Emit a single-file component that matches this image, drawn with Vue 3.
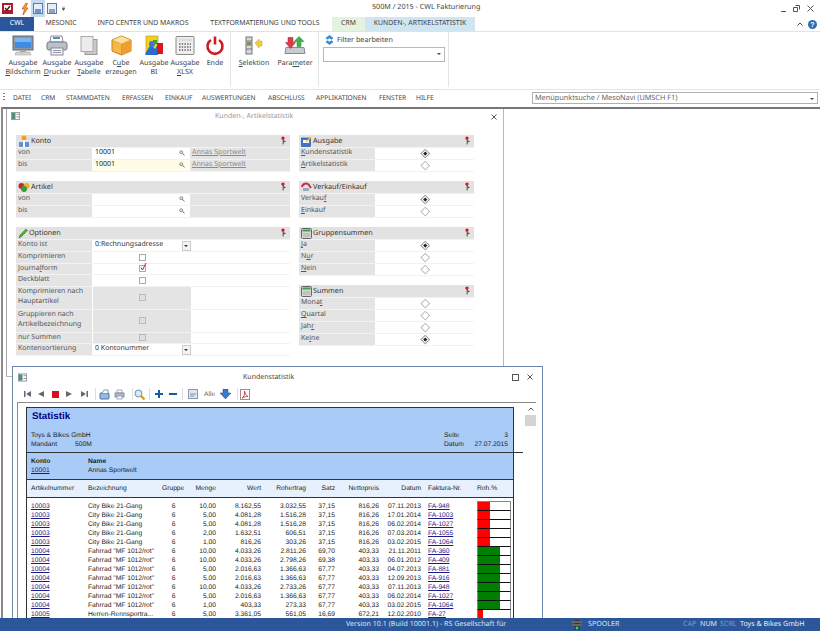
<script setup>
const tabs = [
  { t: 'MESONIC', w: 54 },
  { t: 'INFO CENTER UND MAKROS', w: 110 },
  { t: 'TEXTFORMATIERUNG UND TOOLS', w: 134 }
]
const menus = [
  ['DATEI', 28], ['CRM', 25], ['STAMMDATEN', 56], ['ERFASSEN', 43], ['EINKAUF', 37],
  ['AUSWERTUNGEN', 66], ['ABSCHLUSS', 48], ['APPLIKATIONEN', 63], ['FENSTER', 37], ['HILFE', 30]
]
const A = 'City Bike 21-Gang'
const B = 'Fahrrad "MF 1012/rot"'
const rows = [
  ['10003', A, '10,00', '8.162,55', '3.032,55', '37,15', '816,26', '07.11.2013', 'FA-948'],
  ['10003', A, '5,00', '4.081,28', '1.516,28', '37,15', '816,26', '17.01.2014', 'FA-1003'],
  ['10003', A, '5,00', '4.081,28', '1.516,28', '37,15', '816,26', '06.02.2014', 'FA-1027'],
  ['10003', A, '2,00', '1.632,51', '606,51', '37,15', '816,26', '07.03.2014', 'FA-1055'],
  ['10003', A, '1,00', '816,26', '303,26', '37,15', '816,26', '03.02.2015', 'FA-1064'],
  ['10004', B, '10,00', '4.033,26', '2.811,26', '69,70', '403,33', '21.11.2011', 'FA-360'],
  ['10004', B, '10,00', '4.033,26', '2.798,26', '69,38', '403,33', '06.01.2012', 'FA-409'],
  ['10004', B, '5,00', '2.016,63', '1.366,63', '67,77', '403,33', '04.07.2013', 'FA-881'],
  ['10004', B, '5,00', '2.016,63', '1.366,63', '67,77', '403,33', '12.09.2013', 'FA-916'],
  ['10004', B, '10,00', '4.033,26', '2.733,26', '67,77', '403,33', '07.11.2013', 'FA-948'],
  ['10004', B, '5,00', '2.016,63', '1.366,63', '67,77', '403,33', '06.02.2014', 'FA-1027'],
  ['10004', B, '1,00', '403,33', '273,33', '67,77', '403,33', '03.02.2015', 'FA-1064'],
  ['10005', 'Herren-Rennsportra...', '5,00', '3.361,05', '561,05', '16,69', '672,21', '12.02.2010', 'FA-27']
]
const pct = (s) => parseFloat(s.replace(',', '.'))
const barColor = (s) => (pct(s) < 50 ? '#ff0000' : '#008000')
const barWidth = (s) => Math.round(pct(s) * 0.32) + 'px'
</script>

<template>
  <div class="app">
    <svg class="defs" width="0" height="0">
      <defs>
        <symbol id="pin" viewBox="0 0 8 10">
          <path d="M3.600 3v6.500" stroke="#333" stroke-width="1" />
          <path d="M4 4.500 7 6 4 7.200z" fill="#555" />
          <circle cx="3.400" cy="2.200" r="1.900" fill="#e01020" />
        </symbol>
        <symbol id="mag" viewBox="0 0 8 8">
          <circle cx="3" cy="3" r="2" fill="#dde" stroke="#777" stroke-width="1" />
          <path d="M4.600 4.600 7.400 7" stroke="#666" stroke-width="1.300" />
        </symbol>
        <symbol id="winicon" viewBox="0 0 10 9">
          <rect x=".5" y=".5" width="9" height="8" fill="#fff" stroke="#8a9aa0" />
          <rect x="1" y="1" width="4" height="7" fill="#4f8f80" />
          <rect x="6" y="2" width="3" height="1" fill="#889" />
          <rect x="6" y="5" width="3" height="1" fill="#889" />
        </symbol>
        <symbol id="ledger" viewBox="0 0 11 11">
          <rect x=".5" y=".5" width="10" height="10" rx="1" fill="#d8d8d0" stroke="#666" />
          <rect x="1.500" y="1.500" width="8" height="2" fill="#3fa050" />
          <path d="M2 6h7M2 8h7" stroke="#aaa" />
        </symbol>
      </defs>
    </svg>

    <header class="titlebar">
      <div class="qat">
        <svg class="q1" width="11" height="11" viewBox="0 0 11 11"><rect width="11" height="11" fill="#b01c2e" /><rect x="2" y="2" width="7" height="5" fill="#fff" /><path d="M3 5l2 2 3-4" stroke="#222" fill="none" stroke-width="1.300" /></svg>
        <svg class="q2" width="8" height="12" viewBox="0 0 8 12"><path d="M5 0 1 6h2.500L2 12l5-7H4.500L6.500 0z" fill="#f4b020" stroke="#c03010" stroke-width=".6" /></svg>
        <span class="q3"><svg width="10" height="11" viewBox="0 0 10 11"><rect x=".5" y=".5" width="9" height="10" fill="#e8eef8" stroke="#5a7aa8" /><rect x="2" y="6" width="6" height="4" fill="#6f93c8" /></svg></span>
        <svg class="q4" width="10" height="11" viewBox="0 0 10 11"><rect x=".5" y=".5" width="9" height="10" fill="#e8eef8" stroke="#5a7aa8" /><rect x="2" y="6" width="6" height="4" fill="#8fa3c0" /></svg>
        <svg class="q5" width="3" height="6" viewBox="0 0 4 6"><path d="M0 .5h4M0 2h4l-2 3z" fill="#444" stroke="#444" stroke-width=".5" /></svg>
      </div>
      <div class="apptitle">500M / 2015 - CWL Fakturierung</div>
      <div class="winbtns">
        <span class="min"></span>
        <svg width="7" height="7" viewBox="0 0 7 7"><path d="M2.500.5h4v4M.5 2.500h4v4h-4z" fill="none" stroke="#555" /></svg>
        <svg width="7" height="7" viewBox="0 0 7 7"><path d="M.5.5l6 6M6.500.5l-6 6" stroke="#555" /></svg>
      </div>
    </header>

    <nav class="tabs">
      <span class="tab cwl">CWL</span>
      <span v-for="t in tabs" :key="t.t" class="tab" :style="{ width: t.w + 'px' }">{{ t.t }}</span>
      <span class="tab crm">CRM</span>
      <span class="tab kunden">KUNDEN-, ARTIKELSTATISTIK</span>
      <span class="tabend">
        <svg width="6" height="4" viewBox="0 0 6 4"><path d="M.5 3.500 3 1l2.500 2.500" fill="none" stroke="#444" /></svg>
        <svg width="9" height="9" viewBox="0 0 9 9"><circle cx="4.500" cy="4.500" r="4.500" fill="#2a6fb8" /><text x="4.500" y="7.200" text-anchor="middle" font-size="7" font-weight="700" fill="#fff" font-family="Liberation Sans">?</text></svg>
      </span>
    </nav>

    <section class="ribbon">
      <div class="group g1">
        <div class="rb w34">
          <svg width="22" height="21" viewBox="0 0 22 21"><rect x="1" y="1" width="20" height="14" fill="#8a98a0" stroke="#667" /><rect x="3" y="3" width="16" height="10" fill="#3f8be0" /><path d="M3 3h16v4H3z" fill="#7ab6ee" /><path d="M8 15h6v2H8z" fill="#aaa" /><path d="M4 17h14l1 3H3z" fill="#d4d4d4" stroke="#999" stroke-width=".5" /></svg>
          <div class="rl">Ausgabe<br><u>B</u>ildschirm</div>
        </div>
        <div class="rb w34">
          <svg width="22" height="21" viewBox="0 0 22 21"><path d="M5 1h11l1 6H4z" fill="#fff" stroke="#889" /><path d="M7 3h7" stroke="#4a90d0" stroke-width="2" /><rect x="1" y="7" width="20" height="8" rx="2" fill="#b8c0c8" stroke="#778" /><rect x="5" y="13" width="12" height="7" fill="#f4f4f4" stroke="#889" /><path d="M7 15.500h8M7 17.500h8" stroke="#99a" /></svg>
          <div class="rl">Ausgabe<br><u>D</u>rucker</div>
        </div>
        <div class="rb w30">
          <svg width="18" height="20" viewBox="0 0 18 20"><rect x="5" y="4" width="12" height="15" fill="#c8c8c8" stroke="#999" /><rect x="1" y="1" width="12" height="15" fill="#ececec" stroke="#aaa" /></svg>
          <div class="rl">Ausgabe<br><u>T</u>abelle</div>
        </div>
        <div class="rb w34">
          <svg width="21" height="21" viewBox="0 0 21 21"><path d="M10.500 1 20 5v11l-9.500 4L1 16V5z" fill="#f5b848" stroke="#c08020" /><path d="M10.500 1 20 5l-9.500 4L1 5z" fill="#fce0a0" stroke="#d09a38" stroke-width=".6" /><path d="M10.500 9v11" stroke="#d09030" /><path d="M10.500 9 20 5v11l-9.500 4z" fill="#ee9f30" /></svg>
          <div class="rl">C<u>u</u>be<br>erzeugen</div>
        </div>
        <div class="rb w32">
          <svg width="20" height="21" viewBox="0 0 20 21"><rect x="2" y="1" width="12" height="18" fill="#f4d020" stroke="#b09010" stroke-width=".6" /><path d="M1 19 7 9l4 5 3-5v11H2z" fill="#2a6cd0" /><circle cx="8" cy="9" r="3" fill="#3878d8" /><rect x="13" y="8" width="6" height="11" fill="#d81820" /><rect x="9" y="5" width="4" height="4" fill="#38a038" /></svg>
          <div class="rl">Ausgabe<br>BI</div>
        </div>
        <div class="rb w30">
          <svg width="20" height="20" viewBox="0 0 20 20"><rect x="1" y="1" width="18" height="18" rx="1" fill="#f0f0f0" stroke="#888" /><rect x="3" y="3" width="14" height="3" fill="#ddd" /><path d="M4 8.500h12M4 11.500h12M4 14.500h12" stroke="#666" stroke-dasharray="1.500 1.200" stroke-width="1.600" /></svg>
          <div class="rl">Ausgabe<br><u>X</u>LSX</div>
        </div>
        <div class="rb w30">
          <svg width="20" height="20" viewBox="0 0 20 20"><path d="M6 4.500a7.500 7.500 0 1 0 8 0" fill="none" stroke="#cc1c24" stroke-width="2.600" /><path d="M10 1v8" stroke="#cc1c24" stroke-width="2.600" /></svg>
          <div class="rl">Ende</div>
        </div>
      </div>
      <div class="group g2">
        <div class="rb w38">
          <svg width="18" height="19" viewBox="0 0 18 19"><rect x="1" y="1" width="6" height="17" fill="#d8d8d8" stroke="#777" /><path d="M1 5h6M1 9h6M1 13h6" stroke="#777" /><rect x="2" y="6" width="4" height="3" fill="#8a8a50" /><path d="M10 7l4-4v2h3v5h-3v2z" fill="#f0d040" stroke="#c0a020" stroke-width=".5" /></svg>
          <div class="rl"><u>S</u>elektion</div>
        </div>
        <div class="rb w44">
          <svg width="22" height="20" viewBox="0 0 22 20"><path d="M2 12h18l1 6H1z" fill="#c8ccd0" stroke="#889" /><path d="M4 1h5v5h2.500l-5 6-5-6H4z" fill="#d84048" stroke="#a02028" stroke-width=".5" transform="translate(0 1)" /><path d="M13 11V6h-3l5-5 5 5h-3v5z" fill="#40b050" stroke="#208030" stroke-width=".5" /></svg>
          <div class="rl">Para<u>m</u>eter</div>
        </div>
      </div>
      <div class="group g3">
        <div class="filter">
          <svg width="9" height="10" viewBox="0 0 9 10"><path d="M4.500 0 8.500 3 6.500 4.700 4.500 3.200 2.500 4.700.5 3zM4.500 10 .5 7l2-1.700 2 1.500 2-1.500 2 1.700z" fill="#3a8cd8" /></svg>
          <span>Filter bearbeiten</span>
        </div>
        <div class="combo"><span class="arrow"></span></div>
      </div>
      <div class="group g4"></div>
    </section>

    <section class="menubar">
      <span class="grip"></span>
      <span v-for="m in menus" :key="m[0]" class="menu" :style="{ width: m[1] + 'px' }">{{ m[0] }}</span>
      <div class="search">
        <span>Menüpunktsuche / MesoNavi (UMSCH F1)</span>
        <span class="arrow"></span>
      </div>
    </section>

    <main class="mdi">
      <div class="win1">
        <div class="w1head">
          <svg width="9" height="8"><use href="#winicon" /></svg>
          <span class="w1title">Kunden-, Artikelstatistik</span>
          <svg width="6" height="6" viewBox="0 0 6 6"><path d="M.5.5l5 5M5.500.5l-5 5" stroke="#555" /></svg>
        </div>
        <div class="form">
          <div class="col left">
            <div class="panel">
              <div class="phead">
                <svg width="12" height="12" viewBox="0 0 12 12"><circle cx="6" cy="3" r="2.500" fill="#f0a020" /><path d="M1 7h10v5H1z" fill="#6090d8" /><path d="M5 5h2v7H5z" fill="#fff" /></svg>
                <b>Konto</b><svg class="pin" width="7" height="9"><use href="#pin" /></svg>
              </div>
              <div class="row r3">
                <span class="lab">von</span>
                <span class="val inp">10001<svg width="6" height="6"><use href="#mag" /></svg></span>
                <span class="lab lnk">Annas Sportwelt</span>
              </div>
              <div class="row r3">
                <span class="lab">bis</span>
                <span class="val inp focus">10001<svg width="6" height="6"><use href="#mag" /></svg></span>
                <span class="lab lnk">Annas Sportwelt</span>
              </div>
            </div>
            <div class="panel">
              <div class="phead">
                <svg width="12" height="11" viewBox="0 0 12 11"><circle cx="3.500" cy="4" r="3" fill="#d02030" /><circle cx="8.500" cy="4" r="3" fill="#f0b020" /><circle cx="6" cy="7" r="3" fill="#30a040" /></svg>
                <b>Artikel</b><svg class="pin" width="7" height="9"><use href="#pin" /></svg>
              </div>
              <div class="row r3">
                <span class="lab">von</span>
                <span class="val inp"><svg width="6" height="6"><use href="#mag" /></svg></span>
                <span class="lab"></span>
              </div>
              <div class="row r3">
                <span class="lab">bis</span>
                <span class="val inp"><svg width="6" height="6"><use href="#mag" /></svg></span>
                <span class="lab"></span>
              </div>
            </div>
            <div class="panel">
              <div class="phead">
                <svg width="10" height="11" viewBox="0 0 10 11"><path d="M1 10 2 7l6-6 1.500 1.500-6 6z" fill="#58b030" stroke="#2f7a18" stroke-width=".6" /></svg>
                <b>Optionen</b><svg class="pin" width="7" height="9"><use href="#pin" /></svg>
              </div>
              <div class="row r2">
                <span class="lab">Konto ist</span>
                <span class="val sel">0:Rechnungsadresse<i class="drop"></i></span>
              </div>
              <div class="row r2 shortr">
                <span class="lab">Komprimieren</span>
                <span class="val ctr"><i class="cb"></i></span>
              </div>
              <div class="row r2 shortr">
                <span class="lab">Journa<u>l</u>form</span>
                <span class="val ctr"><i class="cb">
                  <svg width="7" height="8" viewBox="0 0 7 8"><path d="M1 4.500 2.500 7 6 0" fill="none" stroke="#e01020" stroke-width="1" /></svg>
                </i></span>
              </div>
              <div class="row r2 shortr">
                <span class="lab">Deckblatt</span>
                <span class="val ctr"><i class="cb"></i></span>
              </div>
              <div class="row r2 tall">
                <span class="lab">Komprimieren nach<br>Hauptartikel</span>
                <span class="val ctr off"><i class="cb dis"></i></span>
              </div>
              <div class="row r2 tall">
                <span class="lab">Gruppieren nach<br>Artikelbezeichnung</span>
                <span class="val ctr off"><i class="cb dis"></i></span>
              </div>
              <div class="row r2 shortr">
                <span class="lab">nur Summen</span>
                <span class="val ctr off"><i class="cb dis"></i></span>
              </div>
              <div class="row r2">
                <span class="lab">Kontensortierung</span>
                <span class="val sel">0 Kontonummer<i class="drop"></i></span>
              </div>
            </div>
          </div>
          <div class="col right">
            <div class="panel">
              <div class="phead">
                <svg width="11" height="11" viewBox="0 0 11 11"><rect x=".5" y="2" width="9" height="8.500" fill="#3a78d0" stroke="#204a90" stroke-width=".6" /><rect x="2" y="4" width="6" height="3" fill="#fff" /><path d="M5 6l5-5" stroke="#f0c020" stroke-width="1.500" /></svg>
                <b>Ausgabe</b><svg class="pin" width="7" height="9"><use href="#pin" /></svg>
              </div>
              <div class="row rr"><span class="lab"><u>K</u>undenstatistik</span><span class="val ctr"><i class="rd on"></i></span></div>
              <div class="row rr"><span class="lab"><u>A</u>rtikelstatistik</span><span class="val ctr"><i class="rd"></i></span></div>
            </div>
            <div class="panel">
              <div class="phead">
                <svg width="11" height="10" viewBox="0 0 11 10"><path d="M1 5a4 4 0 0 1 7-2l2 3" fill="none" stroke="#c83040" stroke-width="2" /><rect x="2" y="6" width="6" height="3" fill="#9ab" /></svg>
                <b>Verkauf/Einkauf</b><svg class="pin" width="7" height="9"><use href="#pin" /></svg>
              </div>
              <div class="row rr"><span class="lab">Verkau<u>f</u></span><span class="val ctr"><i class="rd on"></i></span></div>
              <div class="row rr"><span class="lab"><u>E</u>inkauf</span><span class="val ctr"><i class="rd"></i></span></div>
            </div>
            <div class="panel">
              <div class="phead">
                <svg width="11" height="11"><use href="#ledger" /></svg>
                <b>Gruppensummen</b><svg class="pin" width="7" height="9"><use href="#pin" /></svg>
              </div>
              <div class="row rr"><span class="lab"><u>J</u>a</span><span class="val ctr"><i class="rd on"></i></span></div>
              <div class="row rr"><span class="lab">N<u>u</u>r</span><span class="val ctr"><i class="rd"></i></span></div>
              <div class="row rr"><span class="lab"><u>N</u>ein</span><span class="val ctr"><i class="rd"></i></span></div>
            </div>
            <div class="panel">
              <div class="phead">
                <svg width="11" height="11"><use href="#ledger" /></svg>
                <b>Summen</b><svg class="pin" width="7" height="9"><use href="#pin" /></svg>
              </div>
              <div class="row rr"><span class="lab">Mona<u>t</u></span><span class="val ctr"><i class="rd"></i></span></div>
              <div class="row rr"><span class="lab"><u>Q</u>uartal</span><span class="val ctr"><i class="rd"></i></span></div>
              <div class="row rr"><span class="lab">Jah<u>r</u></span><span class="val ctr"><i class="rd"></i></span></div>
              <div class="row rr"><span class="lab">Ke<u>i</u>ne</span><span class="val ctr"><i class="rd on"></i></span></div>
            </div>
          </div>
        </div>
      </div>

      <div class="win2">
        <div class="w2head">
          <svg width="9" height="9"><use href="#winicon" /></svg>
          <span class="w2title">Kundenstatistik</span>
          <span class="maxb"></span>
          <svg width="6" height="6" viewBox="0 0 6 6"><path d="M.5.5l5 5M5.500.5l-5 5" stroke="#555" /></svg>
        </div>
        <div class="tools">
          <svg width="7" height="6" viewBox="0 0 7 6"><path d="M0 0h1.500v6H0zM7 0v6L2 3z" fill="#667" /></svg>
          <svg class="m75" width="6" height="6" viewBox="0 0 6 6"><path d="M6 0v6L0 3z" fill="#667" /></svg>
          <svg class="m75" width="7" height="7" viewBox="0 0 7 7"><rect width="7" height="7" fill="#d0141e" /></svg>
          <svg class="m75" width="6" height="6" viewBox="0 0 6 6"><path d="M0 0v6l6-3z" fill="#667" /></svg>
          <svg class="m85" width="7" height="6" viewBox="0 0 7 6"><path d="M7 0H5.500v6H7zM0 0v6l5-3z" fill="#667" /></svg>
          <i class="tsep m7"></i>
          <svg class="m3" width="11" height="11" viewBox="0 0 11 11"><rect x="1" y="4" width="9" height="6" rx="1" fill="#9ab8e0" stroke="#4a70a8" /><path d="M3 4l2-3h4v3" fill="#fff" stroke="#4a70a8" stroke-width=".7" /></svg>
          <svg class="m4" width="11" height="11" viewBox="0 0 11 11"><path d="M3 1h5v3H3z" fill="#fff" stroke="#889" stroke-width=".7" /><rect x="1" y="4" width="9" height="4" fill="#a8bcd8" stroke="#678" stroke-width=".7" /><rect x="3" y="7" width="5" height="3" fill="#fff" stroke="#889" stroke-width=".7" /></svg>
          <i class="tsep m7"></i>
          <svg class="m1" width="11" height="11" viewBox="0 0 11 11"><circle cx="4.500" cy="4.500" r="3.500" fill="#d8ecf8" stroke="#6a90b0" /><path d="M7 7l3.500 3.500" stroke="#d89020" stroke-width="2" /></svg>
          <i class="tsep m4"></i>
          <svg class="m55" width="8" height="8" viewBox="0 0 8 8"><path d="M3 0h2v3h3v2H5v3H3V5H0V3h3z" fill="#1a5aa0" /></svg>
          <svg class="m6" width="8" height="2" viewBox="0 0 8 2"><rect width="8" height="2" fill="#1a5aa0" /></svg>
          <i class="tsep m45"></i>
          <svg class="m55" width="10" height="10" viewBox="0 0 10 10"><rect x=".5" y=".5" width="9" height="9" fill="#dde6f0" stroke="#8a98a8" /><path d="M2 5h6M2 7h4" stroke="#7a90b0" /></svg>
          <span class="alle m6">Alle</span>
          <svg class="m35" width="11" height="10" viewBox="0 0 11 10"><path d="M3 0h5v4h3L5.500 10 0 4h3z" fill="#3a78c8" stroke="#1c4a90" stroke-width=".5" /></svg>
          <i class="tsep m6"></i>
          <svg class="m25" width="10" height="11" viewBox="0 0 10 11"><rect x=".5" y=".5" width="9" height="10" fill="#fff" stroke="#a88" /><path d="M2 9c2-1 3-4 2.500-7 .5 3 2 5 3.500 5.500-2 0-4 .5-6 1.500z" fill="none" stroke="#d02020" stroke-width=".8" /></svg>
        </div>
        <div class="viewer">
          <div class="page">
            <div class="rhead">
              <div class="rtitle">Statistik</div>
              <div class="rmeta">
                <div>
                  <div>Toys &amp; Bikes GmbH</div>
                  <div class="mand"><span>Mandant</span><span>500M</span></div>
                </div>
                <div class="rpage">
                  <div class="kv"><span>Seite</span><span>3</span></div>
                  <div class="kv"><span>Datum</span><span>27.07.2015</span></div>
                </div>
              </div>
            </div>
            <div class="rkonto">
              <div class="k1"><b>Konto</b><a>10001</a></div>
              <div><b>Name</b><span>Annas Sportwelt</span></div>
            </div>
            <div class="chead grid">
              <span>Artikelnummer</span><span>Bezeichnung</span><span class="gr">Gruppe</span>
              <span class="rt">Menge</span><span class="rt">Wert</span><span class="rt">Rohertrag</span>
              <span class="rt">Satz</span><span class="rt">Nettopreis</span><span class="rt">Datum</span>
              <span class="fk">Faktura-Nr.</span><span class="ph">Roh.%</span>
            </div>
            <div class="body">
              <div v-for="(r, i) in rows" :key="i" class="grid drow">
                <a>{{ r[0] }}</a><span class="nw">{{ r[1] }}</span><span class="gv">6</span>
                <span class="rt">{{ r[2] }}</span><span class="rt">{{ r[3] }}</span><span class="rt">{{ r[4] }}</span>
                <span class="rt">{{ r[5] }}</span><span class="rt">{{ r[6] }}</span><span class="rt">{{ r[7] }}</span>
                <a class="fk">{{ r[8] }}</a>
                <span class="bar"><i :style="{ width: barWidth(r[5]), background: barColor(r[5]) }"></i></span>
              </div>
            </div>
          </div>
          <div class="scroll">
            <span class="sup"><svg width="6" height="4" viewBox="0 0 6 4"><path d="M.5 3.500 3 1l2.500 2.500" fill="none" stroke="#555" /></svg></span>
            <span class="thumb"></span>
          </div>
          <div class="hline"></div>
        </div>
      </div>
    </main>

    <footer class="status">
      <span class="ver">Version 10.1 (Build 10001.1) - RS Gesellschaft für</span>
      <svg class="light" width="10" height="10" viewBox="0 0 10 10"><rect x="2.500" width="5" height="10" fill="#333" /><rect y="1" width="10" height="2" fill="#666" /><rect y="4" width="10" height="2" fill="#666" /><circle cx="5" cy="8" r="1.500" fill="#30e050" /></svg>
      <span class="spool">SPOOLER</span>
      <span class="dim cap">CAP</span><span class="num">NUM</span><span class="dim scrl">SCRL</span>
      <span class="comp">Toys &amp; Bikes GmbH</span>
    </footer>
  </div>
</template>

<style scoped>
.app { width: 820px; height: 631px; overflow: hidden; position: relative; background: #fff; font-family: "Noto Sans", sans-serif; font-size: 6.700px; color: #444; display: flex; flex-direction: column; text-rendering: geometricPrecision; }
.defs { position: absolute; }
svg { display: block; flex: none; }

.titlebar { height: 17px; display: flex; align-items: center; position: relative; flex: none; }
.qat { display: flex; align-items: center; padding-left: 2px; }
.q1 { margin-right: 8px; }
.q2 { margin-right: 2px; }
.q3 { background: #c5d9ef; padding: 3px 2px; margin-right: 2px; }
.q4 { margin-right: 5px; }
.apptitle { position: absolute; left: 372px; top: 2px; font-size: 7.200px; line-height: 11px; color: #444; white-space: nowrap; }
.winbtns { position: absolute; right: 6px; top: 5px; display: flex; gap: 7px; align-items: center; }
.min { width: 5px; height: 1px; background: #555; margin-top: 6px; }

.tabs { height: 14px; display: flex; flex: none; font-size: 6.900px; line-height: 14px; border-bottom: 1px solid #e2e2e2; box-sizing: content-box; }
.tab { text-align: center; flex: none; white-space: nowrap; }
.cwl { width: 34px; background: #2b579a; color: #fff; }
.crm { width: 33px; background: #e4f3e0; }
.kunden { width: 110px; background: #cfe6f2; }
.tabend { margin-left: auto; display: flex; align-items: center; gap: 5px; padding-right: 3px; }

.ribbon { height: 58px; display: flex; flex: none; box-sizing: border-box; border-bottom: 1px solid #e4e4e4; }
.group { display: flex; border-right: 1px solid #e4e4e4; height: 55px; box-sizing: border-box; padding-top: 3px; }
.g1 { width: 231px; padding-left: 6px; }
.g2 { width: 88px; padding-left: 4px; }
.g3 { width: 130px; padding-left: 4px; display: block; }
.g4 { border: 0; }
.rb { display: flex; flex-direction: column; align-items: center; flex: none; }
.rb svg { height: 21px; }
.rl { text-align: center; line-height: 9px; margin-top: 3px; font-size: 7.100px; white-space: nowrap; }
.w30 { width: 30px; } .w32 { width: 32px; } .w34 { width: 34px; } .w38 { width: 38px; } .w44 { width: 44px; }
.filter { display: flex; align-items: center; gap: 3px; height: 10px; margin: 0 0 0 2px; font-size: 7.200px; }
.combo { position: relative; height: 13px; border: 1px solid #b8b8b8; margin-top: 2px; box-sizing: content-box; width: 120px; }
.arrow { position: absolute; right: 3px; top: 5px; border: 2px solid transparent; border-top-color: #444; border-bottom: 0; }

.menubar { height: 17px; display: flex; align-items: center; position: relative; flex: none; font-size: 6.600px; padding: 0 0 3px 3px; box-sizing: border-box; color: #444; }
.grip { width: 2px; height: 9px; margin-right: 8px; background: repeating-linear-gradient(#777 0 1px, transparent 1px 3px); flex: none; }
.menu { flex: none; white-space: nowrap; }
.search { position: absolute; left: 532px; top: 2px; width: 286px; height: 12px; border: 1px solid #b0b0b0; box-sizing: border-box; color: #666; line-height: 10px; padding-left: 2px; font-size: 7.300px; }

.mdi { flex: 1; position: relative; border-top: 2px solid #777; border-left: 2px solid #8a8a8a; overflow: hidden; margin-left: 1px; }

.win1 { position: absolute; left: 3px; top: 0; width: 498px; height: 268px; border-left: 1px solid #a8a8a8; border-right: 1px solid #b8b8b8; border-bottom: 1px solid #b8b8b8; box-sizing: border-box; background: #fff; }
.w1head { height: 26px; display: flex; align-items: flex-start; padding: 3px 6px 0 4px; box-sizing: border-box; position: relative; }
.w1title { position: absolute; left: 208px; top: 2px; color: #999; font-size: 7px; line-height: 11px; white-space: nowrap; }
.w1head svg:last-child { margin-left: auto; margin-top: 2px; }
.form { display: grid; grid-template-columns: 274px 175px; column-gap: 9px; padding-left: 9px; }
.col { display: flex; flex-direction: column; gap: 9px; }
.panel { display: flex; flex-direction: column; gap: 1px; background: #f2f2f2; padding-bottom: 1px; color: #555; font-size: 7px; }
.phead { height: 12px; background: #e2e2e2; display: flex; align-items: center; gap: 1px; color: #333; position: relative; padding-left: 2px; font-size: 7.200px; }
.phead b { font-weight: 400; }
.pin { position: absolute; right: 3px; top: 1px; }
.row { display: grid; height: 11px; line-height: 10px; background: #fff; }
.r3 { grid-template-columns: 76px 96px 1fr; column-gap: 1px; }
.r2 { grid-template-columns: 76px 98px; column-gap: 1px; }
.rr { grid-template-columns: 76px 98px; column-gap: 1px; }
.shortr { height: 10.500px; }
.tall { height: 22px; }
.lab { background: #e4e4e4; padding-left: 2px; white-space: nowrap; overflow: hidden; color: #555; }
.lnk { color: #8a8a8a; text-decoration: underline; padding-left: 2px; }
.val { background: #fff; position: relative; padding-left: 2px; color: #222; }
.inp svg { position: absolute; right: 4px; top: 2px; }
.focus { background: #fffde8; }
.sel { color: #333; }
.drop { position: absolute; right: 0; top: 1px; width: 7px; height: 8px; border: 1px solid #ccc; background: #f4f4f4; }
.drop::after { content: ""; position: absolute; left: 1px; top: 3px; border: 2px solid transparent; border-top-color: #333; border-bottom: 0; }
.ctr { display: flex; align-items: center; justify-content: center; padding: 0; }
.off { background: #e4e4e4; }
.cb { width: 7px; height: 7px; box-sizing: border-box; border: 1px solid #aaa; background: #fff; position: relative; display: block; }
.cb svg { position: absolute; left: 0; top: -3px; }
.dis { background: #e0e0e0; border-color: #bbb; }
.rd { width: 6.500px; height: 6.500px; box-sizing: border-box; border: 1px solid #bbb; transform: rotate(45deg); display: block; background: #fff; position: relative; }
.rd.on { border-color: #999; }
.rd.on::after { content: ""; position: absolute; left: 1px; top: 1px; width: 2.500px; height: 2.500px; background: #222; }

.win2 { position: absolute; left: 9px; top: 257px; width: 531px; height: 270px; background: #fff; border: 1px solid #6b87ad; box-sizing: border-box; font-family: "Liberation Sans", Arial, sans-serif; }
.w2head { height: 20px; display: flex; align-items: center; padding: 0 9px 0 5px; position: relative; }
.w2title { position: absolute; left: 230px; top: 6px; font-size: 7px; line-height: 10px; font-family: "Noto Sans", sans-serif; color: #444; white-space: nowrap; }
.maxb { width: 5px; height: 5px; border: 1px solid #555; margin-left: auto; margin-right: 8px; }
.tools { height: 14px; display: flex; align-items: center; padding-left: 10.500px; }
.m1 { margin-left: 1px; } .m25 { margin-left: 2.500px; } .m3 { margin-left: 3px; } .m35 { margin-left: 3.500px; }
.m4 { margin-left: 4px; } .m45 { margin-left: 4.500px; } .m55 { margin-left: 5.500px; } .m6 { margin-left: 6px; }
.m7 { margin-left: 7px; } .m75 { margin-left: 7.500px; } .m85 { margin-left: 8.500px; }
.tsep { width: 1px; height: 12px; background: #ddd; flex: none; }
.alle { color: #666; font-size: 6.700px; width: 12px; flex: none; }

.viewer { position: relative; margin: 1px 6px 0 4px; height: 230px; border-top: 1px solid #8a8a8a; border-left: 1px solid #8a8a8a; padding: 4px 0 0 8px; font-size: 6.700px; line-height: 9px; color: #222; }
.page { width: 488px; border-left: 1px solid #333; border-right: 1px solid #333; border-top: 1px solid #333; box-sizing: border-box; }
.rhead { height: 44px; background: #a9cbf7; padding: 3px 5px 0 4px; box-sizing: border-box; }
.rtitle { font-size: 9.800px; font-weight: 700; color: #00008b; line-height: 12px; padding-left: 1px; }
.rmeta { display: flex; justify-content: space-between; margin-top: 8px; }
.mand { display: flex; gap: 18px; }
.rpage { width: 64px; }
.kv { display: flex; justify-content: space-between; }
.rkonto { height: 28px; background: #a9cbf7; padding: 4px 0 0 4px; box-sizing: border-box; border-top: 1px solid #333; border-bottom: 1px solid #333; display: flex; }
.rkonto > div { display: flex; flex-direction: column; }
.k1 { width: 57px; }
.rkonto b { font-weight: 700; }
a { color: #1a1a8c; text-decoration: underline; }
.grid { display: grid; grid-template-columns: 57px 74px 23px 31px 45px 45px 29px 44px 42px 56px 36px; padding-left: 4px; white-space: nowrap; }
.chead { height: 18px; background: #e6f1fd; border-bottom: 1px solid #333; line-height: 18px; box-sizing: border-box; }
.rt { text-align: right; }
.gr { text-align: left; }
.gv { text-align: center; }
.fk { padding-left: 7px; }
.body { padding-top: 4px; }
.drow { height: 9px; line-height: 9px; }
.nw { overflow: hidden; }
.bar { display: block; height: 8px; width: 32px; border-bottom: 1px solid #111; border-left: 1px solid #888; border-right: 1px solid #888; }
.drow:first-child .bar { box-shadow: 0 -1px #888; }
.bar i { display: block; height: 8px; }
.scroll { position: absolute; right: 0; top: 0; width: 11px; height: 100%; }
.sup { display: flex; height: 12px; align-items: center; justify-content: center; }
.thumb { display: block; height: 11px; background: #d4d4d4; }
.hline { position: absolute; left: 495px; top: 49px; width: 10px; height: 1px; background: #333; }

.status { height: 13px; flex: none; background: #2b579a; color: #fff; position: relative; font-size: 7.100px; line-height: 13px; }
.status > * { position: absolute; top: 0; white-space: nowrap; }
.ver { left: 346px; color: #dbe6f5; }
.light { left: 572px; top: 2px; }
.spool { left: 588px; color: #dbe6f5; }
.cap { left: 683px; } .num { left: 700px; color: #dbe6f5; } .scrl { left: 720px; } .comp { left: 740px; color: #e8eff8; }
.dim { color: #7f9cc8; }
</style>
